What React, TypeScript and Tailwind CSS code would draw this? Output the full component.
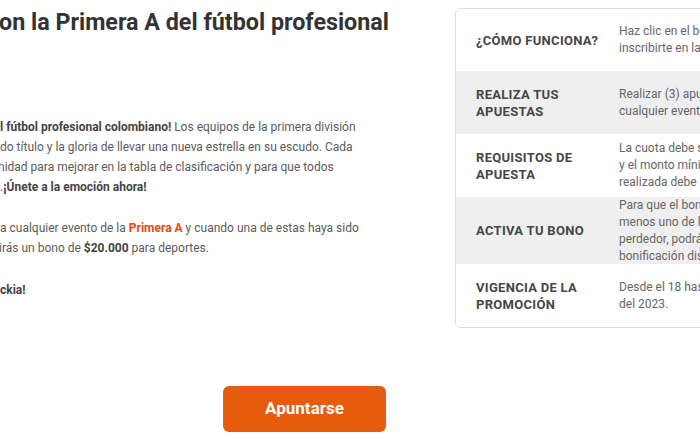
import React from 'react';

type Row = {
  label: React.ReactNode;
  value: React.ReactNode;
  h: string;
  gray?: boolean;
};

const rows: Row[] = [
  {
    label: '¿CÓMO FUNCIONA?',
    value: (
      <>
        Haz clic en el botón Apuntarse para
        <br />
        inscribirte en la promoción.
      </>
    ),
    h: 'h-[62px]',
  },
  {
    label: (
      <>
        REALIZA TUS
        <br />
        APUESTAS
      </>
    ),
    value: (
      <>
        Realizar (3) apuestas en
        <br />
        cualquier evento de la Primera A.
      </>
    ),
    h: 'h-[63px]',
    gray: true,
  },
  {
    label: (
      <>
        REQUISITOS DE
        <br />
        APUESTA
      </>
    ),
    value: (
      <>
        La cuota debe ser mínimo de 1.50
        <br />
        y el monto mínimo de la apuesta
        <br />
        realizada debe ser de $10.000.
      </>
    ),
    h: 'h-[63px]',
  },
  {
    label: 'ACTIVA TU BONO',
    value: (
      <>
        Para que el bono se active, al
        <br />
        menos uno de los eventos debe ser
        <br />
        perdedor, podrás encontrar la
        <br />
        bonificación disponible en tu cuenta.
      </>
    ),
    h: 'h-[67px]',
    gray: true,
  },
  {
    label: (
      <>
        VIGENCIA DE LA
        <br />
        PROMOCIÓN
      </>
    ),
    value: (
      <>
        Desde el 18 hasta el 31 de julio
        <br />
        del 2023.
      </>
    ),
    h: 'h-[63px]',
  },
];

function PromoTable() {
  return (
    <div className="mt-[8px] w-[330px] shrink-0 overflow-hidden rounded-[6px] border border-[#dcdcdc] bg-white">
      {rows.map((r, i) => (
        <div key={i} className={`flex items-center ${r.h} ${r.gray ? 'bg-[#efefef]' : 'bg-white'}`}>
          <div className="w-[163px] shrink-0 pl-[20px] text-[13px] font-bold leading-[17px] tracking-[0.3px] text-[#464646]">
            {r.label}
          </div>
          <div className="whitespace-nowrap text-[12px] leading-[17px] text-[#666]">{r.value}</div>
        </div>
      ))}
    </div>
  );
}

export default function App() {
  return (
    <div className="relative h-[441px] w-[700px] overflow-hidden bg-white font-['Roboto',sans-serif]">
      <div className="flex">
        <div className="w-[455px] shrink-0 overflow-hidden whitespace-nowrap">
          <h1 className="mt-[8px] -ml-[1px] text-[23.3px] font-bold leading-[28px] text-[#333]">
            on la Primera A del fútbol profesional
          </h1>

          <div className="mt-[81px] text-[12px] leading-[20px] text-[#5c5c5c]">
            <p className="mb-[21px]">
              <span className="font-bold text-[#444]">l fútbol profesional colombiano!</span> Los equipos de la primera división
              <br />
              do título y la gloria de llevar una nueva estrella en su escudo. Cada
              <br />
              <span className="-ml-[2px]">nidad para mejorar en la tabla de clasificación y para que todos</span>
              <br />
              .<span className="font-bold text-[#444]">¡Únete a la emoción ahora!</span>
            </p>
            <p className="mb-[22px]">
              a cualquier evento de la <span className="font-bold text-[#e8470f]">Primera A</span> y cuando una de estas haya sido
              <br />
              <span className="-ml-[1px]">
                irás un bono de <span className="font-bold text-[#444]">$20.000</span> para deportes.
              </span>
            </p>
            <p className="font-bold text-[#444]">ckia!</p>
          </div>
        </div>
        <PromoTable />
      </div>

      <div className="mt-[58px] pl-[223px]">
        <button className="h-[46px] w-[163px] rounded-[6px] bg-[#e95b0c] text-[17px] font-bold text-white">
          Apuntarse
        </button>
      </div>
    </div>
  );
}
